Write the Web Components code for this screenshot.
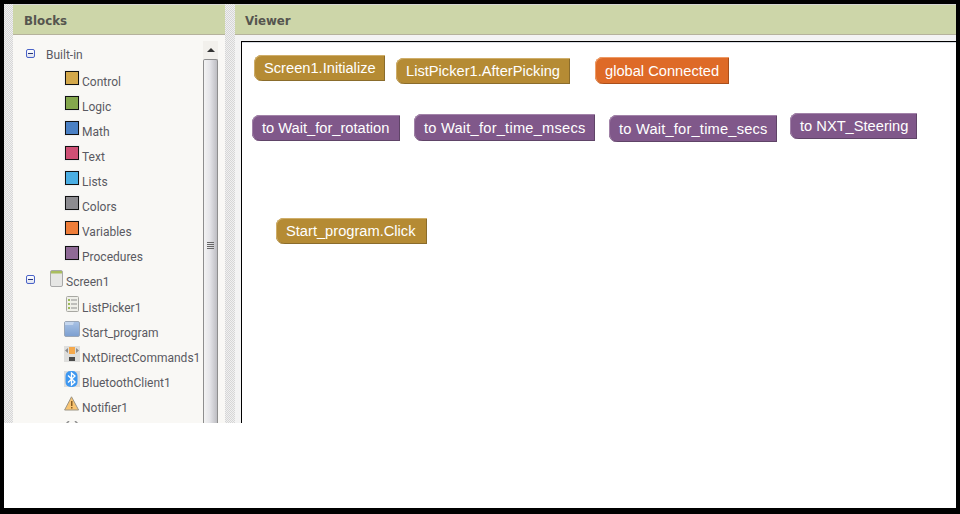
<!DOCTYPE html>
<html>
<head>
<meta charset="utf-8">
<title>Blocks</title>
<style>
    html, body { margin: 0; height: 100%; background: #000; overflow: hidden; }
    body { padding: 4px 4px 6px; box-sizing: border-box; font-family: "Liberation Sans", Arial, sans-serif; }
</style>
</head>
<body>
<designer-frame>
    <panel-box slot="blocks" heading="Blocks">
        <tree-scroll>
            <tree-row toggle label="Built-in" level="0"></tree-row>
            <tree-row label="Control" level="1"><color-swatch color="#d3a84b"></color-swatch></tree-row>
            <tree-row label="Logic" level="1"><color-swatch color="#84a74c"></color-swatch></tree-row>
            <tree-row label="Math" level="1"><color-swatch color="#4a80c4"></color-swatch></tree-row>
            <tree-row label="Text" level="1"><color-swatch color="#cf5075"></color-swatch></tree-row>
            <tree-row label="Lists" level="1"><color-swatch color="#4baee3"></color-swatch></tree-row>
            <tree-row label="Colors" level="1"><color-swatch color="#8d8c90"></color-swatch></tree-row>
            <tree-row label="Variables" level="1"><color-swatch color="#ee7d39"></color-swatch></tree-row>
            <tree-row label="Procedures" level="1"><color-swatch color="#8f6a96"></color-swatch></tree-row>
            <tree-row toggle label="Screen1" level="0" screen>
                <svg width="13" height="17" viewBox="0 0 13 17">
                    <rect x=".5" y=".5" width="12" height="16" rx="1.5" fill="#e6e6e4" stroke="#a9a9a9"/>
                    <path d="M1 1h11v2.500H1z" fill="#a9bd5e"/>
                </svg>
            </tree-row>
            <tree-row label="ListPicker1" level="1">
                <svg width="16" height="17" viewBox="0 0 16 17">
                    <rect x="2.500" y=".5" width="12" height="15" rx="1" fill="#efefe9" stroke="#a8a8a2"/>
                    <path d="M4 3h2v2H4zM4 7h2v2H4zM4 11h2v2H4z" fill="#9dba5a"/>
                    <path d="M7 4h6M7 8h6M7 12h6" stroke="#8d8d8d"/>
                </svg>
            </tree-row>
            <tree-row label="Start_program" level="1">
                <svg width="16" height="17" viewBox="0 0 16 17">
                    <defs><linearGradient id="btn" x1="0" y1="0" x2="0" y2="1">
                        <stop offset="0" stop-color="#a9c3e6"/><stop offset="1" stop-color="#7c9fd0"/>
                    </linearGradient></defs>
                    <rect x=".5" y=".5" width="15" height="15" rx="1.500" fill="url(#btn)" stroke="#9aa6b6"/>
                    <path d="M1 1h9l-1 3H1z" fill="#c4d6ee"/>
                </svg>
            </tree-row>
            <tree-row label="NxtDirectCommands1" level="1">
                <svg width="16" height="16" viewBox="0 0 16 16">
                    <rect width="16" height="16" fill="#dededc"/>
                    <path d="M5 1h6v7H5z" fill="#f5a94c"/>
                    <path d="M4 2v5L1 4.500zM12 2v5l3-2.500z" fill="#8c8c8c"/>
                    <path d="M5 11h6v4H5z" fill="#4b4b4b"/>
                </svg>
            </tree-row>
            <tree-row label="BluetoothClient1" level="1">
                <svg width="16" height="16" viewBox="0 0 16 16">
                    <rect width="16" height="16" fill="#dcdcdc"/>
                    <rect x="1.500" y="0" width="12" height="16" rx="5" fill="#3d97f0"/>
                    <path d="M4 4.500l7 6.500-3.500 3V2L11 5 4 11.500" fill="none" stroke="#fff" stroke-width="1.300"/>
                </svg>
            </tree-row>
            <tree-row label="Notifier1" level="1">
                <svg width="16" height="15" viewBox="0 0 16 15">
                    <path d="M7.500.8L.6 14h14z" fill="#f8c472" stroke="#9c9484"/>
                    <path d="M7 5h1.500v5H7zM7 11h1.500v1.500H7z" fill="#8a5f22"/>
                </svg>
            </tree-row>
            <tree-row level="1">
                <svg width="16" height="15" viewBox="0 0 16 15">
                    <path d="M5 0L2 3l3 3M11 0l3 3-3 3" fill="none" stroke="#8f8f8f" stroke-width="1.500"/>
                </svg>
            </tree-row>
        </tree-scroll>
    </panel-box>
    <panel-box slot="viewer" heading="Viewer">
        <block-canvas>
            <code-block tone="gold" x="12" y="13" w="131">Screen1.Initialize</code-block>
            <code-block tone="gold" x="154" y="16" w="174">ListPicker1.AfterPicking</code-block>
            <code-block tone="orange" x="353" y="15" w="134" h="27">global Connected</code-block>
            <code-block tone="purple" x="10" y="73" w="148">to Wait_for_rotation</code-block>
            <code-block tone="purple" x="172" y="72" w="181" h="27" spacing=".22">to Wait_for_time_msecs</code-block>
            <code-block tone="purple" x="367" y="73" w="168" h="27" spacing=".2">to Wait_for_time_secs</code-block>
            <code-block tone="purple" x="548" y="71" w="127">to NXT_Steering</code-block>
            <code-block tone="gold" x="34" y="176" w="151">Start_program.Click</code-block>
        </block-canvas>
    </panel-box>
</designer-frame>

<script>
class DesignerFrame extends HTMLElement {
    constructor() {
        super();
        this.attachShadow({ mode: 'open' });
        this.shadowRoot.innerHTML = `
        <style>
            :host { display: block; height: 504px; background: #fff; }
            .work {
                display: flex;
                height: 419px;
                overflow: hidden;
            }
            .gutter {
                flex: none;
                background-color: #ececec;
                background-image: conic-gradient(#d6d6d6 25%, #f0f0f0 0 50%, #d6d6d6 0 75%, #f0f0f0 0);
                background-size: 2px 2px;
            }
            .left { width: 9px; }
            .split { width: 10px; }
            .pane { min-width: 0; }
            .blocks { flex: none; width: 212px; }
            .viewer { flex: 1; }
        </style>
        <div class="work">
            <div class="gutter left"></div>
            <div class="pane blocks"><slot name="blocks"></slot></div>
            <div class="gutter split"></div>
            <div class="pane viewer"><slot name="viewer"></slot></div>
        </div>`;
    }
}

class PanelBox extends HTMLElement {
    constructor() {
        super();
        this.attachShadow({ mode: 'open' });
    }

    connectedCallback() {
        this.shadowRoot.innerHTML = `
        <style>
            :host { display: flex; flex-direction: column; height: 419px; }
            .head {
                flex: none;
                box-sizing: border-box;
                height: 31px;
                padding: 3px 0 0 ${this.getAttribute('heading') === 'Blocks' ? 11 : 10}px;
                display: flex;
                align-items: center;
                background: #cdd6a9;
                border-top: 1px solid #d6d6d2;
                border-bottom: 1px solid #b5b29c;
                font: bold 11.8px "DejaVu Sans", sans-serif;
                color: #55554f;
            }
            .body { flex: 1; min-height: 0; background: #f9f8f5; }
        </style>
        <div class="head">${this.getAttribute('heading')}</div>
        <div class="body"><slot></slot></div>`;
    }
}

class TreeScroll extends HTMLElement {
    constructor() {
        super();
        this.attachShadow({ mode: 'open' });
        this.shadowRoot.innerHTML = `
        <style>
            :host { display: flex; height: 388px; overflow: hidden; padding-right: 7px; box-sizing: border-box; }
            .rows { flex: 1; min-width: 0; padding-top: 6px; }
            .bar { flex: none; width: 15px; padding-top: 6px; display: flex; flex-direction: column; }
            .up {
                flex: none;
                height: 18px;
                display: flex;
                align-items: center;
                justify-content: center;
                background: #f2f0ec;
            }
            .up i {
                width: 0;
                height: 0;
                border: 4px solid transparent;
                border-top: 0;
                border-bottom: 4px solid #333;
            }
            .thumb {
                flex: 1;
                box-sizing: border-box;
                border: 1px solid #8e8e8e;
                border-bottom: 0;
                border-radius: 2px 2px 0 0;
                background: linear-gradient(90deg, #f3f3f3, #e4e4e8 45%, #bdbdc2);
                padding-top: 182px;
                display: flex;
                flex-direction: column;
                align-items: center;
                gap: 1px;
            }
            .thumb b { width: 7px; height: 1px; background: #666; }
        </style>
        <div class="rows"><slot></slot></div>
        <div class="bar">
            <div class="up"><i></i></div>
            <div class="thumb"><b></b><b></b><b></b><b></b></div>
        </div>`;
    }
}

class TreeRow extends HTMLElement {
    constructor() {
        super();
        this.attachShadow({ mode: 'open' });
    }

    connectedCallback() {
        const toggle = this.hasAttribute('toggle');
        const screen = this.hasAttribute('screen');
        const label = this.getAttribute('label') || '';
        const swatch = this.firstElementChild && this.firstElementChild.localName === 'color-swatch';
        // text sits a little lower on component rows than on the palette rows
        const textTop = screen || swatch ? 8 : toggle ? 6 : 9;
        this.shadowRoot.innerHTML = `
        <style>
            :host { display: block; height: 25px; }
            .row { display: flex; height: 25px; align-items: flex-start; padding-left: ${toggle ? 13 : 51}px; }
            .minus {
                flex: none;
                box-sizing: border-box;
                width: 9px;
                height: 9px;
                margin-top: ${screen ? 9 : 8}px;
                margin-right: ${screen ? 15 : 11}px;
                border: 1px solid #4a63c8;
                border-radius: 2px;
                background: linear-gradient(#fff, #dfe3ee);
                display: flex;
                align-items: center;
                justify-content: center;
            }
            .minus i { width: 5px; height: 1px; background: #27357c; }
            .icon { flex: none; width: 16px; height: 17px; margin-right: 2px; margin-top: 5px; display: flex; justify-content: center; }
            .icon.screen { width: 13px; margin-right: 3px; margin-top: 4px; }
            .text { font: 12px/16px Roboto, sans-serif; color: #5a5a62; margin-top: ${textTop}px; white-space: nowrap; }
        </style>
        <div class="row">
            ${toggle ? '<span class="minus"><i></i></span>' : ''}
            ${this.children.length ? `<span class="icon ${screen ? 'screen' : ''}"><slot></slot></span>` : ''}
            <span class="text">${label}</span>
        </div>`;
    }
}

class ColorSwatch extends HTMLElement {
    constructor() {
        super();
        this.attachShadow({ mode: 'open' });
    }

    connectedCallback() {
        this.shadowRoot.innerHTML = `
        <style>
            :host {
                display: block;
                box-sizing: border-box;
                width: 14px;
                height: 14px;
                border: 1px solid #111;
                outline: 1px solid #eeeeee;
                background: ${this.getAttribute('color')};
            }
        </style>`;
    }
}

class BlockCanvas extends HTMLElement {
    constructor() {
        super();
        this.attachShadow({ mode: 'open' });
        this.shadowRoot.innerHTML = `
        <style>
            :host { display: block; height: 388px; padding: 6px 0 0 6px; box-sizing: border-box; background: #f3f3f3; }
            .canvas {
                position: relative;
                height: 100%;
                box-sizing: border-box;
                background: #fff;
                border-top: 1px solid #000;
                border-left: 1px solid #000;
                box-shadow: inset 0 1px #d8dce2;
            }
        </style>
        <div class="canvas"><slot></slot></div>`;
    }
}

const TONES = {
    gold: ['#b58b34', '#cfae6a', '#8a6c2c'],
    purple: ['#80588a', '#a283a9', '#5f4467'],
    orange: ['#de6a27', '#ee9a64', '#a94f1c']
};

class CodeBlock extends HTMLElement {
    constructor() {
        super();
        this.attachShadow({ mode: 'open' });
    }

    connectedCallback() {
        const [fill, light, dark] = TONES[this.getAttribute('tone')];
        const h = this.getAttribute('h') || 26;
        this.shadowRoot.innerHTML = `
        <style>
            :host {
                position: absolute;
                left: ${this.getAttribute('x')}px;
                top: ${this.getAttribute('y')}px;
                width: ${this.getAttribute('w')}px;
                height: ${h}px;
                box-sizing: border-box;
                padding-left: 10px;
                display: flex;
                align-items: center;
                border-radius: 8px 0 0 8px;
                background: ${fill};
                box-shadow: inset 0 1px ${light}, inset 1px 0 ${light}, inset -1px 0 ${dark}, inset 0 -1px ${dark};
                color: #fff;
                font: 14.67px "Liberation Sans", Arial, sans-serif;
                letter-spacing: ${this.getAttribute('spacing') || 0}px;
                white-space: nowrap;
            }
        </style>
        <slot></slot>`;
    }
}

customElements.define('designer-frame', DesignerFrame);
customElements.define('panel-box', PanelBox);
customElements.define('tree-scroll', TreeScroll);
customElements.define('tree-row', TreeRow);
customElements.define('color-swatch', ColorSwatch);
customElements.define('block-canvas', BlockCanvas);
customElements.define('code-block', CodeBlock);
</script>
</body>
</html>
